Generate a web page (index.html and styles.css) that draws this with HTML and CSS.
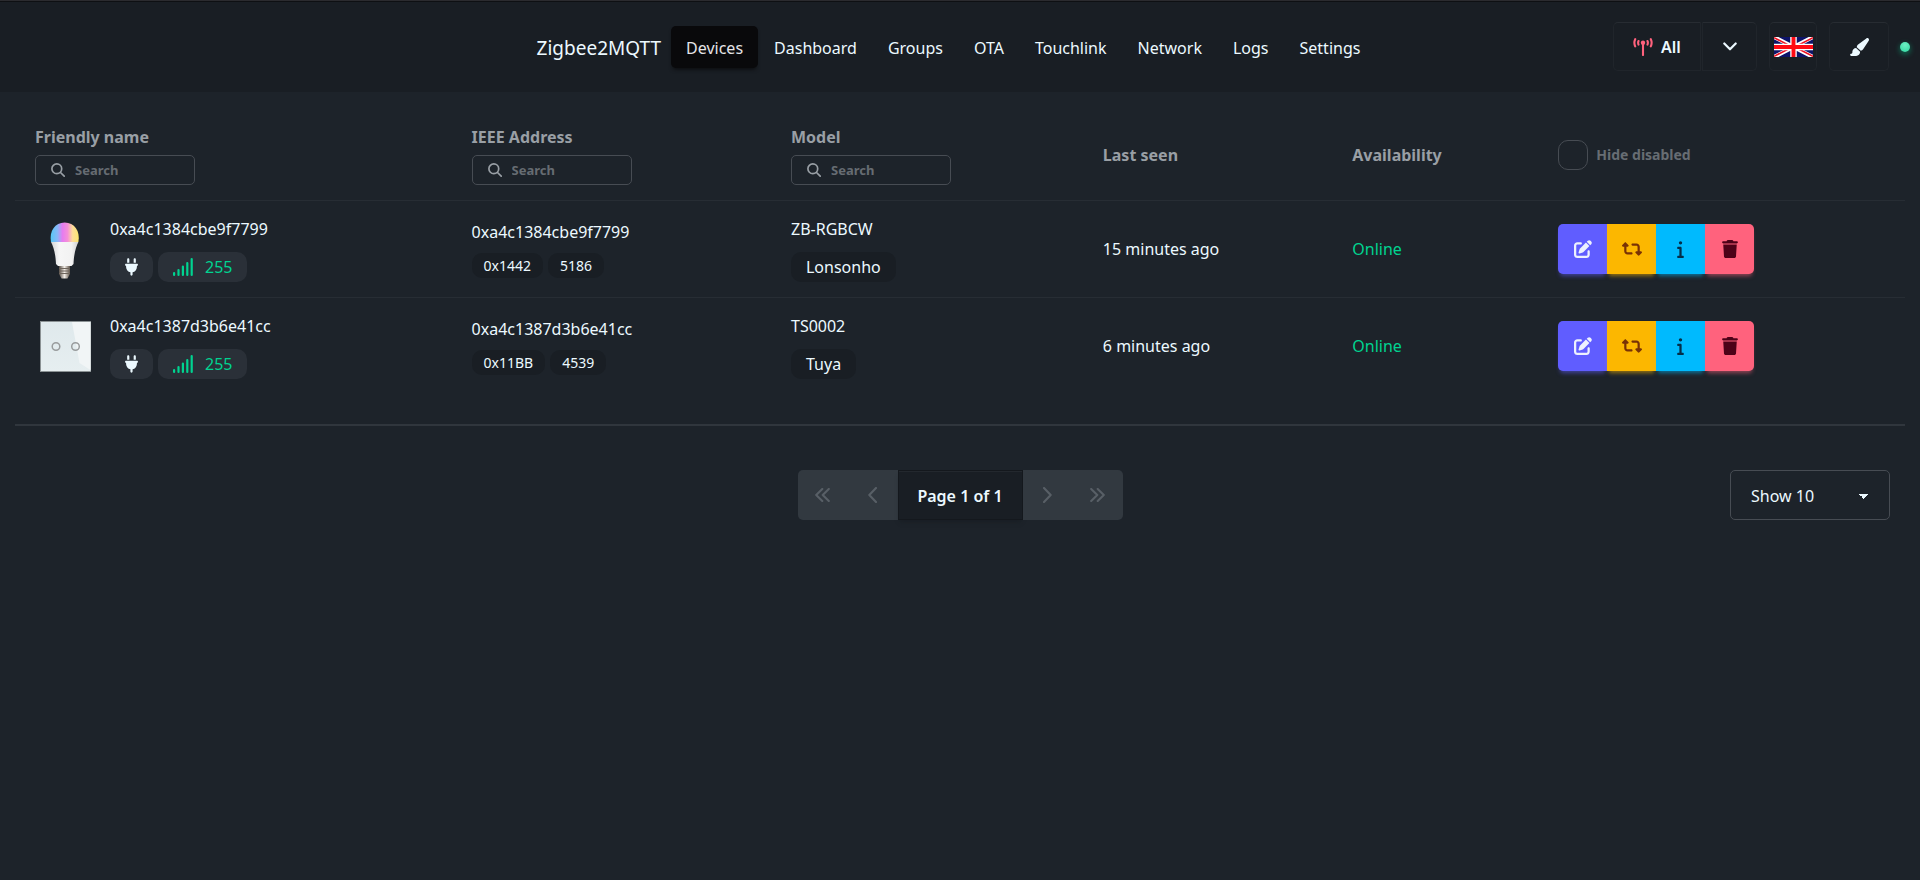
FILE: index.html
```html
<!DOCTYPE html>
<html lang="en">
<head>
<meta charset="utf-8">
<title>Zigbee2MQTT</title>
<link rel="stylesheet" href="styles.css">
</head>
<body>
<svg class="sprite" aria-hidden="true">
  <symbol id="i-edit" viewBox="0 0 512 512"><path d="M471.6 21.7c-21.9-21.9-57.3-21.9-79.2 0L362.3 51.7l97.9 97.9 30.1-30.1c21.9-21.9 21.9-57.3 0-79.2L471.6 21.7zm-299.2 220c-6.1 6.1-10.8 13.6-13.5 21.9l-29.6 88.8c-2.9 8.6-.6 18.1 5.8 24.6s15.9 8.7 24.6 5.8l88.8-29.6c8.2-2.7 15.7-7.4 21.9-13.5L437.7 172.3 339.7 74.3 172.4 241.7zM96 64C43 64 0 107 0 160V416c0 53 43 96 96 96H352c53 0 96-43 96-96V320c0-17.7-14.3-32-32-32s-32 14.3-32 32v96c0 17.7-14.3 32-32 32H96c-17.7 0-32-14.3-32-32V160c0-17.7 14.3-32 32-32h96c17.7 0 32-14.3 32-32s-14.3-32-32-32H96z"/></symbol>
  <symbol id="i-retweet" viewBox="0 0 576 512"><path d="M272 416c17.7 0 32-14.3 32-32s-14.3-32-32-32H160c-17.7 0-32-14.3-32-32V192h32c12.9 0 24.6-7.8 29.6-19.8s2.2-25.7-6.9-34.9l-64-64c-12.5-12.5-32.8-12.5-45.3 0l-64 64c-9.2 9.2-11.9 22.9-6.9 34.9s16.6 19.8 29.6 19.8l32 0 0 128c0 53 43 96 96 96H272zM304 96c-17.7 0-32 14.3-32 32s14.3 32 32 32l112 0c17.7 0 32 14.3 32 32l0 128-32 0c-12.9 0-24.6 7.8-29.6 19.8s-2.2 25.7 6.9 34.9l64 64c12.5 12.5 32.8 12.5 45.3 0l64-64c9.2-9.2 11.9-22.9 6.9-34.9s-16.6-19.8-29.6-19.8l-32 0V192c0-53-43-96-96-96L304 96z"/></symbol>
  <symbol id="i-info" viewBox="0 0 192 512"><path d="M48 80a48 48 0 1 1 96 0A48 48 0 1 1 48 80zM0 224c0-17.7 14.3-32 32-32H96c17.7 0 32 14.3 32 32V448h32c17.7 0 32 14.3 32 32s-14.3 32-32 32H32c-17.7 0-32-14.3-32-32s14.3-32 32-32H64V256H32c-17.7 0-32-14.3-32-32z"/></symbol>
  <symbol id="i-trash" viewBox="0 0 448 512"><path d="M135.2 17.7L128 32H32C14.3 32 0 46.3 0 64S14.3 96 32 96H416c17.7 0 32-14.3 32-32s-14.3-32-32-32H320l-7.2-14.3C307.4 6.8 296.3 0 284.2 0H163.8c-12.1 0-23.2 6.8-28.6 17.7zM416 128H32L53.2 467c1.6 25.3 22.6 45 47.9 45H346.9c25.3 0 46.3-19.7 47.9-45L416 128z"/></symbol>
  <symbol id="i-plug" viewBox="0 0 384 512"><path d="M96 0C78.3 0 64 14.3 64 32v96h64V32c0-17.7-14.3-32-32-32zM288 0c-17.7 0-32 14.3-32 32v96h64V32c0-17.7-14.3-32-32-32zM32 160c-17.7 0-32 14.3-32 32s14.3 32 32 32v32c0 77.4 55 142 128 156.8V480c0 17.7 14.3 32 32 32s32-14.3 32-32V412.8C297 398 352 333.4 352 256V224c17.7 0 32-14.3 32-32s-14.3-32-32-32H32z"/></symbol>
  <symbol id="i-brush" viewBox="0 0 576 512"><path d="M339.3 367.1c27.3-3.9 51.9-19.4 67.2-42.9L568.2 74.1c12.6-19.5 9.4-45.3-7.6-61.2S517.7-4.4 499.1 9.6L262.4 187.2c-24 18-38.2 46.1-38.4 76.1L339.3 367.1zm-19.6 25.4l-116-104.4C143.9 290.3 96 339.6 96 400c0 3.9 .2 7.8 .6 11.6C98.4 429.1 86.4 448 68.8 448H64c-17.7 0-32 14.3-32 32s14.3 32 32 32H208c61.9 0 112-50.1 112-112c0-2.5-.1-5-.2-7.5z"/></symbol>
  <symbol id="i-signal" viewBox="0 0 20 18"><path fill="none" stroke="currentColor" stroke-width="2.2" stroke-linecap="round" d="M1.1 15v1.900M5.500 12v4.900M9.900 8.500v8.400M14.300 5v11.900M18.700 1.100v15.800"/></symbol>
  <symbol id="i-search" viewBox="0 0 14 14"><g fill="none" stroke="currentColor" stroke-width="1.7" stroke-linecap="round"><circle cx="5.8" cy="5.8" r="4.9"/><path d="M9.500 9.500l3.700 3.700"/></g></symbol>
  <symbol id="i-tower" viewBox="0 0 20 18"><g fill="none" stroke="currentColor" stroke-width="2.1" stroke-linecap="round"><path d="M10 5v12M2.200 1.200a8.500 8.500 0 0 0 0 7.200M17.800 1.200a8.500 8.500 0 0 1 0 7.200M5.500 3a4.600 4.600 0 0 0 0 3.600M14.500 3a4.600 4.600 0 0 1 0 3.600"/></g><circle cx="10" cy="4.800" r="2.200" fill="currentColor"/></symbol>
  <symbol id="i-down" viewBox="0 0 14 9"><path fill="none" stroke="currentColor" stroke-width="2.2" stroke-linecap="round" stroke-linejoin="round" d="M1.300 1.500L7 7.300l5.700-5.800"/></symbol>
  <symbol id="i-left" viewBox="0 0 9 16"><path fill="none" stroke="currentColor" stroke-width="2.1" stroke-linecap="round" stroke-linejoin="round" d="M8 1L1.300 8 8 15"/></symbol>
  <symbol id="i-left2" viewBox="0 0 15 14"><path fill="none" stroke="currentColor" stroke-width="2.1" stroke-linecap="round" stroke-linejoin="round" d="M7.300 1L1.200 7l6.100 6M13.800 1L7.700 7l6.100 6"/></symbol>
</svg>

<header class="navbar">
  <nav class="nav">
    <a class="brand" href="#">Zigbee2MQTT</a>
    <a class="nav-link nav-link-active" href="#">Devices</a>
    <a class="nav-link" href="#">Dashboard</a>
    <a class="nav-link" href="#">Groups</a>
    <a class="nav-link" href="#">OTA</a>
    <a class="nav-link" href="#">Touchlink</a>
    <a class="nav-link" href="#">Network</a>
    <a class="nav-link" href="#">Logs</a>
    <a class="nav-link" href="#">Settings</a>
  </nav>
  <div class="tools">
    <div class="join">
      <button class="tool tool-join" type="button"><svg class="ico-tower"><use href="#i-tower"/></svg>All</button>
      <button class="tool tool-menu" type="button" aria-label="Join options"><svg class="ico-down"><use href="#i-down"/></svg></button>
    </div>
    <button class="tool tool-flag" type="button" aria-label="English">
      <svg class="flag" viewBox="0 0 60 30" preserveAspectRatio="none">
        <path fill="#0e1468" d="M0 0h60v30H0z"/>
        <path stroke="#fff" stroke-width="6" d="M0 0l60 30M60 0L0 30"/>
        <path stroke="#f01020" stroke-width="2.4" d="M0 1l28 14M32 15l28 14M60 1L32 15M28 15L0 29"/>
        <path stroke="#fff" stroke-width="10" d="M30 0v30M0 15h60"/>
        <path stroke="#ff0a14" stroke-width="6" d="M30 0v30M0 15h60"/>
      </svg>
    </button>
    <button class="tool tool-theme" type="button" aria-label="Theme"><svg class="ico-brush"><use href="#i-brush"/></svg></button>
    <span class="status"></span>
  </div>
</header>

<main class="main">
  <table class="devices">
    <colgroup><col class="c1"><col class="c2"><col class="c3"><col class="c4"><col class="c5"><col class="c6"></colgroup>
    <thead>
      <tr>
        <th>Friendly name<label class="search"><svg class="ico-search"><use href="#i-search"/></svg><input type="text" placeholder="Search" aria-label="Search friendly name"></label></th>
        <th>IEEE Address<label class="search"><svg class="ico-search"><use href="#i-search"/></svg><input type="text" placeholder="Search" aria-label="Search IEEE address"></label></th>
        <th>Model<label class="search"><svg class="ico-search"><use href="#i-search"/></svg><input type="text" placeholder="Search" aria-label="Search model"></label></th>
        <th>Last seen</th>
        <th>Availability</th>
        <th><label class="hide"><input class="check" type="checkbox">Hide disabled</label></th>
      </tr>
    </thead>
    <tbody>
      <tr>
        <td>
          <div class="device">
            <svg class="pic" viewBox="0 0 60 60">
              <defs>
                <linearGradient id="rgb"><stop offset="0" stop-color="#55c8f5"/><stop offset=".25" stop-color="#8ab8f8"/><stop offset=".42" stop-color="#e67cf0"/><stop offset=".6" stop-color="#f58fd8"/><stop offset=".78" stop-color="#fddc9a"/><stop offset="1" stop-color="#fbe56e"/></linearGradient>
                <linearGradient id="body"><stop offset="0" stop-color="#d4d4d6"/><stop offset=".3" stop-color="#f6f6f6"/><stop offset=".75" stop-color="#f2f2f2"/><stop offset="1" stop-color="#cfcfd1"/></linearGradient>
                <linearGradient id="cap"><stop offset="0" stop-color="#554c44"/><stop offset=".5" stop-color="#f1ece6"/><stop offset="1" stop-color="#5c5248"/></linearGradient>
              </defs>
              <path fill="url(#rgb)" d="M16 23C14 12 20 3.500 29.700 3.500S45.400 12 43.400 23z"/>
              <path fill="url(#body)" d="M16 23h27.400C41 28 39 34 38.500 45l-2 2H23l-2-2C20.500 34 18.500 28 16 23z"/>
              <path fill="url(#cap)" d="M24 47h11v8l-2.500 4.500h-6L24 55z"/>
              <path stroke="#6e655c" stroke-width="1" d="M24 49.500h11M24 52h11M24 54.500h11"/>
            </svg>
            <div class="stack">
              <a class="name" href="#">0xa4c1384cbe9f7799</a>
              <div class="badges">
                <span class="badge badge-plug"><svg class="ico-plug"><use href="#i-plug"/></svg></span>
                <span class="badge badge-signal"><svg class="ico-signal"><use href="#i-signal"/></svg>255</span>
              </div>
            </div>
          </div>
        </td>
        <td><div class="stack stack-tight">0xa4c1384cbe9f7799<div class="badges"><span class="badge badge-sm">0x1442</span><span class="badge badge-sm">5186</span></div></div></td>
        <td><div class="stack"><a class="name" href="#">ZB-RGBCW</a><div class="badges"><span class="badge badge-dark">Lonsonho</span></div></div></td>
        <td>15 minutes ago</td>
        <td class="online">Online</td>
        <td>
          <div class="actions">
            <button class="act act-edit" type="button" aria-label="Rename"><svg class="ico-edit"><use href="#i-edit"/></svg></button>
            <button class="act act-conf" type="button" aria-label="Reconfigure"><svg class="ico-retweet"><use href="#i-retweet"/></svg></button>
            <button class="act act-info" type="button" aria-label="Interview"><svg class="ico-info"><use href="#i-info"/></svg></button>
            <button class="act act-del" type="button" aria-label="Remove"><svg class="ico-trash"><use href="#i-trash"/></svg></button>
          </div>
        </td>
      </tr>
      <tr>
        <td>
          <div class="device">
            <svg class="pic" viewBox="0 0 60 60">
              <defs><linearGradient id="glass" x1="0" y1="0" x2="0" y2="1"><stop offset="0" stop-color="#dfe9ec"/><stop offset="1" stop-color="#e6eef0"/></linearGradient></defs>
              <path fill="#8b9294" d="M5 5h51v51H5z"/>
              <path fill="url(#glass)" d="M6 6h49.500v49H6z"/>
              <path fill="#f1f5f6" d="M37 6h18.500v48L44.500 47z"/>
              <g fill="none" stroke="#999c9d" stroke-width="1.500"><circle cx="21" cy="30.500" r="3.800"/><circle cx="40.500" cy="30.500" r="3.800"/></g>
            </svg>
            <div class="stack">
              <a class="name" href="#">0xa4c1387d3b6e41cc</a>
              <div class="badges">
                <span class="badge badge-plug"><svg class="ico-plug"><use href="#i-plug"/></svg></span>
                <span class="badge badge-signal"><svg class="ico-signal"><use href="#i-signal"/></svg>255</span>
              </div>
            </div>
          </div>
        </td>
        <td><div class="stack stack-tight">0xa4c1387d3b6e41cc<div class="badges"><span class="badge badge-sm">0x11BB</span><span class="badge badge-sm">4539</span></div></div></td>
        <td><div class="stack"><a class="name" href="#">TS0002</a><div class="badges"><span class="badge badge-dark">Tuya</span></div></div></td>
        <td>6 minutes ago</td>
        <td class="online">Online</td>
        <td>
          <div class="actions">
            <button class="act act-edit" type="button" aria-label="Rename"><svg class="ico-edit"><use href="#i-edit"/></svg></button>
            <button class="act act-conf" type="button" aria-label="Reconfigure"><svg class="ico-retweet"><use href="#i-retweet"/></svg></button>
            <button class="act act-info" type="button" aria-label="Interview"><svg class="ico-info"><use href="#i-info"/></svg></button>
            <button class="act act-del" type="button" aria-label="Remove"><svg class="ico-trash"><use href="#i-trash"/></svg></button>
          </div>
        </td>
      </tr>
    </tbody>
  </table>

  <hr class="divider">

  <div class="footer">
    <div class="pager">
      <button class="page" type="button" disabled aria-label="First page"><svg class="ico-double"><use href="#i-left2"/></svg></button>
      <button class="page" type="button" disabled aria-label="Previous page"><svg class="ico-single"><use href="#i-left"/></svg></button>
      <button class="page page-current" type="button">Page 1 of 1</button>
      <button class="page" type="button" disabled aria-label="Next page"><svg class="ico-single flip"><use href="#i-left"/></svg></button>
      <button class="page" type="button" disabled aria-label="Last page"><svg class="ico-double flip"><use href="#i-left2"/></svg></button>
    </div>
    <select class="size" aria-label="Page size"><option>Show 10</option><option>Show 20</option><option>Show 50</option></select>
  </div>
</main>
</body>
</html>
```
FILE: styles.css
```css
* { box-sizing: border-box; }

body {
  margin: 0;
  min-height: 100vh;
  background: #1d232a;
  color: #ecf9ff;
  font: 16px/26px "Noto Sans", "Open Sans", sans-serif;
}

button, input, select { font: inherit; color: inherit; }
button { padding: 0; cursor: pointer; }
a { color: inherit; text-decoration: none; }
svg { display: block; fill: currentColor; flex: none; }
.sprite { position: absolute; width: 0; height: 0; }

/* Header */
.navbar {
  display: grid;
  grid-template-columns: 1fr auto 1fr;
  align-items: center;
  min-height: 92px;
  padding: 0 8px 0 0;
  border-top: 1px solid #2b2b2f;
  background: #191e24;
  box-shadow: inset 0 1px #0e1013;
}
.nav { grid-column: 2; display: flex; align-items: center; gap: 1px; }
.brand { margin-right: 9px; padding-top: 2px; font-size: 19px; }
.nav-link { padding: 9px 15px 7px; border-radius: 5px; }
.nav-link-active {
  background: #09090b;
  color: #e4e4e7;
  box-shadow: 0 3px 4px -2px #09090b;
}
.tools { display: flex; align-items: center; justify-content: flex-end; gap: 12px; }
.join { display: flex; gap: 1px; }
.tool {
  display: flex;
  align-items: center;
  justify-content: center;
  height: 49px;
  border: 1px solid #20252b;
  border-top-color: #272c32;
  border-radius: 5px;
  background: #191e24;
  font-weight: 600;
}
.tool-join { width: 88px; gap: 8px; border-radius: 5px 0 0 5px; }
.tool-menu { width: 55px; border-radius: 0 5px 5px 0; }
.tool-flag { width: 48px; }
.tool-theme { width: 60px; }
.flag { width: 39px; height: 20px; }
.status {
  width: 10px;
  height: 10px;
  margin: 0 2px 0 -1px;
  border-radius: 50%;
  background: radial-gradient(circle at 50% 30%, #6df0c4, #2fd8a0);
  box-shadow: 0 2px 5px 1px #00d39055;
}

/* Device table */
.main { padding: 19px 15px 0; }
.devices { width: 100%; table-layout: fixed; border-collapse: collapse; }
.c1 { width: 23.1%; }
.c2 { width: 16.9%; }
.c3 { width: 16.5%; }
.c4 { width: 13.2%; }
.c5 { width: 10.9%; }
.c6 { width: 19.4%; }
th, td { padding: 15px 20px; text-align: left; vertical-align: middle; }
th { padding-top: 13px; color: #999fa5; font-weight: 700; }
tbody tr { border-top: 1px solid #272d34; }

.search {
  display: flex;
  align-items: center;
  gap: 10px;
  width: 160px;
  height: 30px;
  margin-top: 5px;
  padding: 0 15px;
  border: 1px solid #474c53;
  border-radius: 5px;
}
.search input {
  flex: 1;
  min-width: 0;
  padding: 0;
  border: 0;
  outline: 0;
  background: none;
  font-size: 13px;
  font-weight: 700;
}
.search input::placeholder { color: #666c72; opacity: 1; }
.hide { display: flex; align-items: center; gap: 8px; color: #676d73; font-size: 14px; }
.check {
  appearance: none;
  width: 30px;
  height: 30px;
  margin: 0;
  border: 1px solid #474c53;
  border-radius: 10px;
}

.device { display: flex; align-items: center; gap: 15px; }
.pic { width: 60px; height: 60px; }
.stack { display: grid; gap: 10px; }
.stack-tight { gap: 9px; line-height: 24px; }
.badges { display: flex; gap: 5px; }
.badge {
  display: flex;
  align-items: center;
  height: 30px;
  padding: 0 15px;
  border-radius: 10px;
  background: #2a3038;
}
.badge-signal { gap: 12px; color: #00d390; }
.badge-dark { background: #191e24; }
.badge-sm { height: 25px; padding: 0 12px; background: #191e24; font-size: 14px; }
.online { color: #00d390; }

.actions { display: flex; }
.act {
  display: flex;
  align-items: center;
  justify-content: center;
  width: 49px;
  height: 50px;
  border: 0;
}
.act:first-child { border-radius: 5px 0 0 5px; }
.act:last-child { border-radius: 0 5px 5px 0; }
.act-edit { background: #605dff; color: #edf1fe; box-shadow: 0 4px 4px -2px #605dff88; }
.act-conf { background: #fcb700; color: #793205; box-shadow: 0 4px 4px -2px #fcb70088; }
.act-info { background: #00bafe; color: #042e49; box-shadow: 0 4px 4px -2px #00bafe88; }
.act-del { background: #ff627d; color: #4d0218; box-shadow: 0 4px 4px -2px #ff627d88; }

/* Footer */
.divider { height: 2px; margin: 30px 0 44px; border: 0; background: #30363d; }
.footer {
  display: grid;
  grid-template-columns: 1fr auto 1fr;
  align-items: center;
  padding: 0 15px;
}
.pager { grid-column: 2; display: flex; }
.page {
  display: flex;
  align-items: center;
  justify-content: center;
  width: 50px;
  height: 50px;
  border: 0;
  background: #323940;
  color: #585f66;
}
.page:first-child { border-radius: 5px 0 0 5px; }
.page:last-child { border-radius: 0 5px 5px 0; }
.page-current {
  width: 125px;
  padding-top: 2px;
  border: 1px solid #14181d;
  background: #191e24;
  color: #ecf9ff;
  font-weight: 600;
  box-shadow: inset 0 1px #23282e, 0 4px 4px -2px #191e24;
}
.size {
  justify-self: end;
  appearance: none;
  width: 160px;
  height: 50px;
  padding: 2px 20px 0;
  border: 1px solid #474c53;
  border-radius: 5px;
  background:
    linear-gradient(45deg, transparent 50%, #ecf9ff 50%) calc(100% - 25px) 23px / 5px 5px no-repeat,
    linear-gradient(-45deg, transparent 50%, #ecf9ff 50%) calc(100% - 20px) 23px / 5px 5px no-repeat,
    #1d232a;
}

/* Icon sizes */
.ico-tower { width: 20px; height: 18px; color: #ff627d; }
.ico-down { width: 14px; height: 9px; }
.ico-brush { width: 20px; height: 18px; }
.ico-search { width: 14px; height: 14px; }
.ico-plug { width: 13px; height: 18px; }
.ico-signal { width: 20px; height: 18px; }
.ico-edit { width: 18px; height: 18px; }
.ico-retweet { width: 20px; height: 18px; }
.ico-info { width: 7px; height: 18px; }
.ico-trash { width: 16px; height: 18px; }
.ico-single { width: 9px; height: 16px; }
.ico-double { width: 15px; height: 14px; }
.flip { transform: scaleX(-1); }
```
